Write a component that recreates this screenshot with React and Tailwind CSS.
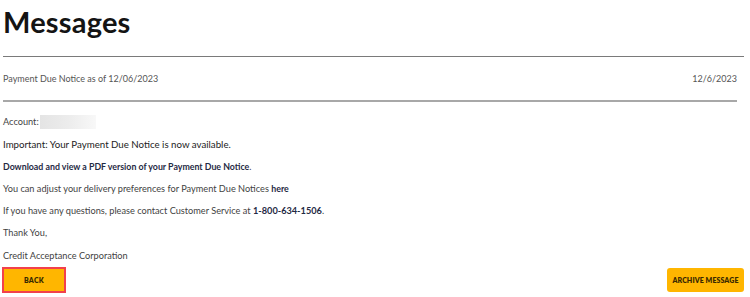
export default function App() {
  const body = "text-[9.2px] leading-[12px] text-[#3f3f3f]";
  return (
    <div className="w-[750px] h-[297px] bg-white overflow-hidden font-['Lato',sans-serif]">
      <div className="pl-[3px] pt-[4px]">
        <h1 className="text-[29px] leading-[36px] font-bold text-[#141414] tracking-[0.2px]">Messages</h1>
      </div>
      <div className="mt-[16px] ml-[3px] mr-[6px] h-px bg-[#7a7a7a]" />
      <div className="flex justify-between items-center ml-[3px] mr-[13px] h-[43px]">
        <span className="text-[9px] leading-[12px] text-[#555]">Payment Due Notice as of 12/06/2023</span>
        <span className="text-[9px] leading-[12px] text-[#555]">12/6/2023</span>
      </div>
      <div className="ml-[3px] mr-[13px] h-[2px] bg-[#a8a8a8]" />
      <div className="pl-[3px] pt-[14px] flex flex-col gap-[10.3px]">
        <div className={body + " flex items-center h-[12px]"}>
          <span>Account:</span>
          <span className="ml-[1px] inline-block w-[56px] h-[14px] bg-gradient-to-r from-[#e4e4e4] via-[#ececec] to-[#f8f8f8]" />
        </div>
        <div className="text-[9.7px] leading-[12px] text-[#222]">Important: Your Payment Due Notice is now available.</div>
        <div className={body}><span className="font-bold text-[#1f2a44] text-[8.8px]">Download and view a PDF version of your Payment Due Notice</span>.</div>
        <div className={body}>You can adjust your delivery preferences for Payment Due Notices <span className="font-bold text-[#1f2a44] text-[8.8px]">here</span></div>
        <div className={body}>If you have any questions, please contact Customer Service at <span className="font-bold text-[#1f2a44]">1-800-634-1506</span>.</div>
        <div className={body}>Thank You,</div>
        <div className={body}>Credit Acceptance Corporation</div>
      </div>
      <div className="flex justify-between items-center pl-[2px] pr-[6px] mt-[5px]">
        <button className="w-[64px] h-[26px] bg-[#ffb600] border-2 border-[#f2404c] text-[7px] font-extrabold text-[#3a2a00] tracking-[0.3px]">BACK</button>
        <button className="w-[77px] h-[24px] bg-[#ffb600] rounded-[3px] text-[7px] font-extrabold text-[#3a2a00] tracking-[0.1px]">ARCHIVE MESSAGE</button>
      </div>
    </div>
  );
}
